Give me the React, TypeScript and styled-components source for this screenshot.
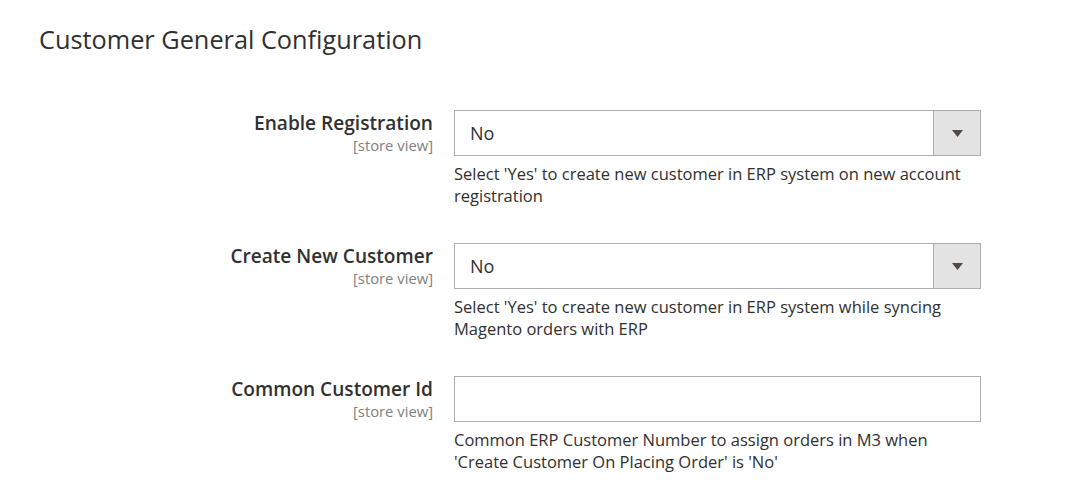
import React from "react";
import styled, { createGlobalStyle } from "styled-components";

const Global = createGlobalStyle`
  html, body { margin: 0; padding: 0; background: #fff; }
  body { font-family: "Open Sans", "Noto Sans", sans-serif; color: #303030; }
`;

const Page = styled.div`
  width: 1075px;
  height: 492px;
  box-sizing: border-box;
  padding-top: 24px;
  overflow: hidden;
`;

const Title = styled.h2`
  margin: 0 0 0 39px;
  font-size: 25.3px;
  line-height: 30px;
  font-weight: 400;
  color: #303030;
`;

const Fieldset = styled.div`
  margin-top: 56px;
  display: flex;
  flex-direction: column;
  gap: 36px;
`;

const Row = styled.div`
  display: flex;
  gap: 21px;
`;

const LabelCol = styled.div`
  width: 433px;
  flex: none;
  text-align: right;
  padding-top: 2px;
`;

const Label = styled.div`
  font-size: 19.1px;
  line-height: 22px;
  font-weight: 600;
  color: #303030;
`;

const Scope = styled.div`
  font-size: 14.8px;
  line-height: 22px;
  color: #808080;
`;

const Control = styled.div`
  width: 527px;
  flex: none;
`;

const SelectBox = styled.div`
  box-sizing: border-box;
  height: 46px;
  border: 1px solid #adadad;
  display: flex;
  align-items: stretch;
  background: #fff;
`;

const SelectValue = styled.div`
  flex: 1;
  display: flex;
  align-items: center;
  padding-left: 15px;
  font-size: 18px;
  color: #303030;
`;

const SelectButton = styled.div`
  width: 46px;
  border-left: 1px solid #adadad;
  background: #e3e3e3;
  display: flex;
  align-items: center;
  justify-content: center;
`;

const TextInput = styled.div`
  box-sizing: border-box;
  height: 46px;
  border: 1px solid #adadad;
  background: #fff;
`;

const Note = styled.div`
  margin-top: 7px;
  font-size: 16.5px;
  line-height: 22px;
  color: #303030;
`;

const Arrow = () => (
  <svg width="11" height="7" viewBox="0 0 11 7">
    <polygon points="0,0 11,0 5.5,7" fill="#514943" />
  </svg>
);

type Field = { label: string; type: "select" | "text"; value?: string; note: string[] };

const fields: Field[] = [
  {
    label: "Enable Registration",
    type: "select",
    value: "No",
    note: ["Select 'Yes' to create new customer in ERP system on new account", "registration"],
  },
  {
    label: "Create New Customer",
    type: "select",
    value: "No",
    note: ["Select 'Yes' to create new customer in ERP system while syncing", "Magento orders with ERP"],
  },
  {
    label: "Common Customer Id",
    type: "text",
    note: ["Common ERP Customer Number to assign orders in M3 when", "'Create Customer On Placing Order' is 'No'"],
  },
];

export default function App() {
  return (
    <Page>
      <Global />
      <Title>Customer General Configuration</Title>
      <Fieldset>
        {fields.map((f) => (
          <Row key={f.label}>
            <LabelCol>
              <Label>{f.label}</Label>
              <Scope>[store view]</Scope>
            </LabelCol>
            <Control>
              {f.type === "select" ? (
                <SelectBox>
                  <SelectValue>{f.value}</SelectValue>
                  <SelectButton>
                    <Arrow />
                  </SelectButton>
                </SelectBox>
              ) : (
                <TextInput />
              )}
              <Note>
                {f.note.map((n, i) => (
                  <div key={i}>{n}</div>
                ))}
              </Note>
            </Control>
          </Row>
        ))}
      </Fieldset>
    </Page>
  );
}
